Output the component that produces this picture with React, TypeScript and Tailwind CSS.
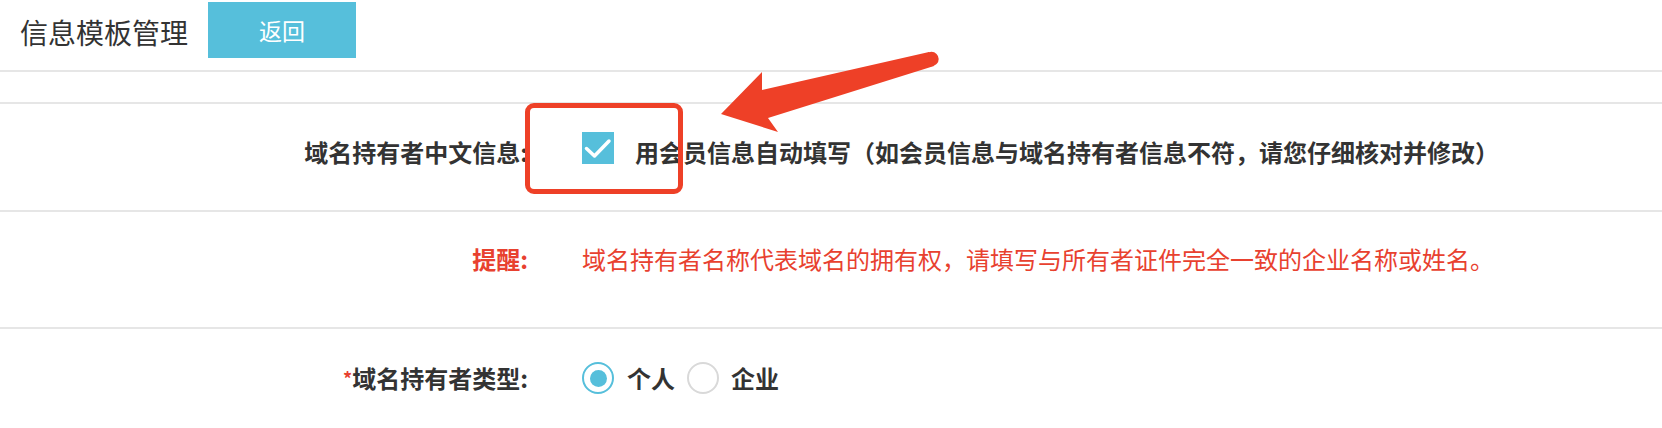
import React from "react";

const font = { fontFamily: '"Noto Sans CJK SC", "Noto Sans", sans-serif' };

export default function App() {
  return (
    <div className="relative w-[1662px] h-[428px] bg-white overflow-hidden text-[#333]" style={font}>
      <header className="h-[72px] flex items-start border-b-2 border-[#e6e6e6]">
        <h1 className="ml-[20px] mt-[14px] text-[28px] leading-[36px] font-normal text-[#333] whitespace-nowrap">信息模板管理</h1>
        <button className="ml-[20px] mt-[2px] w-[148px] h-[56px] bg-[#56bfdb] text-white text-[23px] leading-[56px]">返回</button>
      </header>
      <div className="h-[32px] border-b-2 border-[#e6e6e6]" />

      <div className="h-[108px] border-b-2 border-[#e6e6e6] flex items-start pt-[28px]">
        <div className="w-[528px] text-right font-bold text-[24px] leading-[32px] mt-[4px] whitespace-nowrap">域名持有者中文信息:</div>
        <div className="ml-[54px] flex items-start">
          <span className="w-[32px] h-[32px] bg-[#56bfdb] flex items-center justify-center">
            <svg width="32" height="32" viewBox="0 0 32 32">
              <path d="M4.5 16.5 L12.5 24 L27 9" fill="none" stroke="white" strokeWidth="3.5" strokeLinecap="round" strokeLinejoin="round" />
            </svg>
          </span>
          <span className="ml-[21px] mt-[4px] font-bold text-[24px] leading-[32px] whitespace-nowrap">用会员信息自动填写（如会员信息与域名持有者信息不符，请您仔细核对并修改）</span>
        </div>
      </div>

      <div className="h-[117px] border-b-2 border-[#e6e6e6] flex items-start pt-[31px]">
        <div className="w-[528px] text-right font-bold text-[24px] leading-[32px] text-[#e8412f] whitespace-nowrap">提醒:</div>
        <div className="ml-[54px] text-[24px] leading-[32px] text-[#e8412f] whitespace-nowrap">域名持有者名称代表域名的拥有权，请填写与所有者证件完全一致的企业名称或姓名。</div>
      </div>

      <div className="flex items-center pt-[33px]">
        <div className="w-[528px] text-right font-bold text-[24px] leading-[32px] whitespace-nowrap">
          <span className="text-[#e8412f] text-[18px] align-top">*</span>域名持有者类型:
        </div>
        <div className="ml-[54px] flex items-center">
          <span className="w-[32px] h-[32px] rounded-full border-2 border-[#56bfdb] flex items-center justify-center">
            <span className="w-[17px] h-[17px] rounded-full bg-[#56bfdb]" />
          </span>
          <span className="ml-[13px] font-bold text-[24px] leading-[32px]">个人</span>
          <span className="ml-[12px] w-[32px] h-[32px] rounded-full border-2 border-[#d9d9d9]" />
          <span className="ml-[12px] font-bold text-[24px] leading-[32px]">企业</span>
        </div>
      </div>

      <div className="absolute left-[525px] top-[103px] w-[158px] h-[91px] border-[5px] border-[#ee4027] rounded-[9px] pointer-events-none" />
      <svg className="absolute left-0 top-0 pointer-events-none" width="1662" height="428" viewBox="0 0 1662 428">
        <polygon points="721,114 762,72 762,90 929,52 934,66 768,118 778,132" fill="#ee4027" />
        <circle cx="931.5" cy="59" r="7.2" fill="#ee4027" />
      </svg>
    </div>
  );
}
